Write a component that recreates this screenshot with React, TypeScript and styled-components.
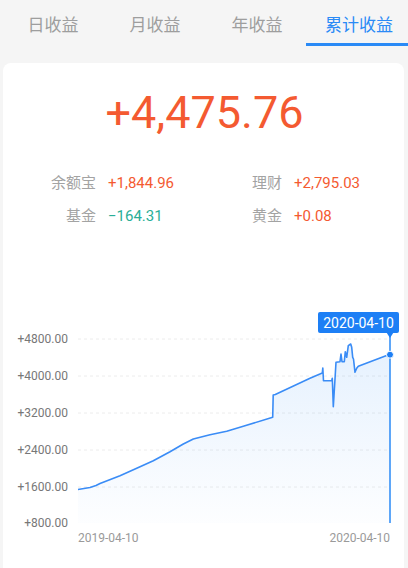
import React from 'react';
import styled, { createGlobalStyle } from 'styled-components';

const GlobalStyle = createGlobalStyle`
  html, body {
    margin: 0;
    padding: 0;
    background: #f5f5f5;
  }
  body {
    font-family: Roboto, "Noto Sans CJK SC", sans-serif;
  }
`;

const Page = styled.div`
  min-height: 568px;
  background: #f5f5f5;
  display: flex;
  flex-direction: column;
`;

const TabBar = styled.div`
  display: flex;
  height: 46px;
`;

const Tab = styled.div<{ $active?: boolean }>`
  flex: 1;
  box-sizing: border-box;
  display: flex;
  align-items: center;
  justify-content: center;
  padding: 3px 0 0 4px;
  font-size: 17px;
  color: ${(p) => (p.$active ? '#2a8af6' : '#9e9e9e')};
  border-bottom: 3px solid ${(p) => (p.$active ? '#2a8af6' : 'transparent')};
`;

const Card = styled.div`
  flex: 1;
  margin: 17px 4px 0 3px;
  background: #fff;
  border-radius: 8px 8px 0 0;
  padding-top: 24px;
`;

const Total = styled.div`
  font-size: 45px;
  line-height: 52px;
  text-align: center;
  color: #f45a31;
  padding-left: 2px;
`;

const Summary = styled.div`
  display: grid;
  grid-template-columns: 93px 114px 48px 1fr;
  column-gap: 12px;
  margin-top: 28px;
  font-size: 15px;
  line-height: 33px;
`;

const Label = styled.span`
  text-align: right;
  color: #a3a3a3;
`;

const Value = styled.span<{ $down?: boolean }>`
  color: ${(p) => (p.$down ? '#2aae97' : '#f45a31')};
`;

const ChartSvg = styled.svg`
  display: block;
  margin-top: 66px;
`;

const items = [
  { label: '余额宝', value: '+1,844.96' },
  { label: '理财', value: '+2,795.03' },
  { label: '基金', value: '−164.31', down: true },
  { label: '黄金', value: '+0.08' },
];

const yTicks = [
  { y: 340, text: '+4800.00' },
  { y: 377, text: '+4000.00' },
  { y: 414, text: '+3200.00' },
  { y: 451, text: '+2400.00' },
  { y: 488, text: '+1600.00' },
  { y: 524, text: '+800.00' },
];

const points: [number, number][] = [
  [78, 490.5], [90, 488.5], [96, 486.5], [100, 484.5], [120, 476.7], [136.7, 469.3],
  [153.3, 461.7], [170, 452.7], [183.3, 445], [193.3, 440], [210, 435.7],
  [226.7, 432.3], [231.7, 430.7], [243.3, 427.3], [272.7, 418.3], [273.2, 396],
  [275.3, 395.5], [310, 379.3], [322.3, 374],
  [322.8, 369], [323.5, 381.7], [331.7, 381.7], [332.3, 379.3], [333.3, 407.7],
  [335, 380], [336, 363.3], [340, 362.7], [341, 355], [342, 362.7], [344.3, 362.7],
  [345.3, 352.7], [346.7, 358.3], [348.3, 346.7], [350.7, 345], [351.7, 348.3],
  [352.7, 358.3], [353.5, 360], [355, 373.3], [356.7, 369.3], [358.3, 367.3],
  [386, 356.7], [390, 355.7],
];

const linePath = points.map(([x, y], i) => `${i ? 'L' : 'M'}${x} ${y}`).join(' ');
const areaPath = `${linePath} L390 524 L78 524 Z`;

const Chart: React.FC = () => (
  <ChartSvg width={401} height={250} viewBox="3 300 401 250">
    <defs>
      <linearGradient id="area" x1="0" y1="0" x2="0" y2="1">
        <stop offset="0%" stopColor="#2a8af6" stopOpacity={0.12} />
        <stop offset="100%" stopColor="#2a8af6" stopOpacity={0.01} />
      </linearGradient>
    </defs>
    {yTicks.map((t) => (
      <g key={t.text}>
        {t.y !== 524 && (
          <line x1={78} x2={390} y1={t.y} y2={t.y} stroke="#ececec" strokeDasharray="3 3" />
        )}
        <text
          x={68}
          y={t.y + 4}
          textAnchor="end"
          fontSize={12}
          fill="#777"
          fontFamily="Roboto, sans-serif"
        >
          {t.text}
        </text>
      </g>
    ))}
    <path d={areaPath} fill="url(#area)" />
    <path d={linePath} fill="none" stroke="#3a8cf6" strokeWidth={1.6} strokeLinejoin="round" />
    <line x1={390} x2={390} y1={337} y2={524} stroke="#2a8af6" strokeWidth={1.5} />
    <circle cx={390} cy={355.7} r={3.5} fill="#1d7ff5" stroke="#fff" strokeWidth={1} />
    <rect x={318} y={313} width={81} height={21} rx={2} fill="#1d7ff5" />
    <path d="M386.5 333.5 L393.5 333.5 L390 339 Z" fill="#1d7ff5" />
    <text
      x={358.5}
      y={328.5}
      textAnchor="middle"
      fontSize={14}
      fill="#fff"
      fontFamily="Roboto, sans-serif"
    >
      2020-04-10
    </text>
    <text x={78} y={543} fontSize={12} fill="#9a9a9a" fontFamily="Roboto, sans-serif">
      2019-04-10
    </text>
    <text
      x={390}
      y={543}
      textAnchor="end"
      fontSize={12}
      fill="#9a9a9a"
      fontFamily="Roboto, sans-serif"
    >
      2020-04-10
    </text>
  </ChartSvg>
);

const App: React.FC = () => {
  const tabs = ['日收益', '月收益', '年收益', '累计收益'];
  return (
    <Page>
      <GlobalStyle />
      <TabBar>
        {tabs.map((t, i) => (
          <Tab key={t} $active={i === 3}>
            {t}
          </Tab>
        ))}
      </TabBar>
      <Card>
        <Total>+4,475.76</Total>
        <Summary>
          {items.map((it) => (
            <React.Fragment key={it.label}>
              <Label>{it.label}</Label>
              <Value $down={it.down}>{it.value}</Value>
            </React.Fragment>
          ))}
        </Summary>
        <Chart />
      </Card>
    </Page>
  );
};

export default App;
